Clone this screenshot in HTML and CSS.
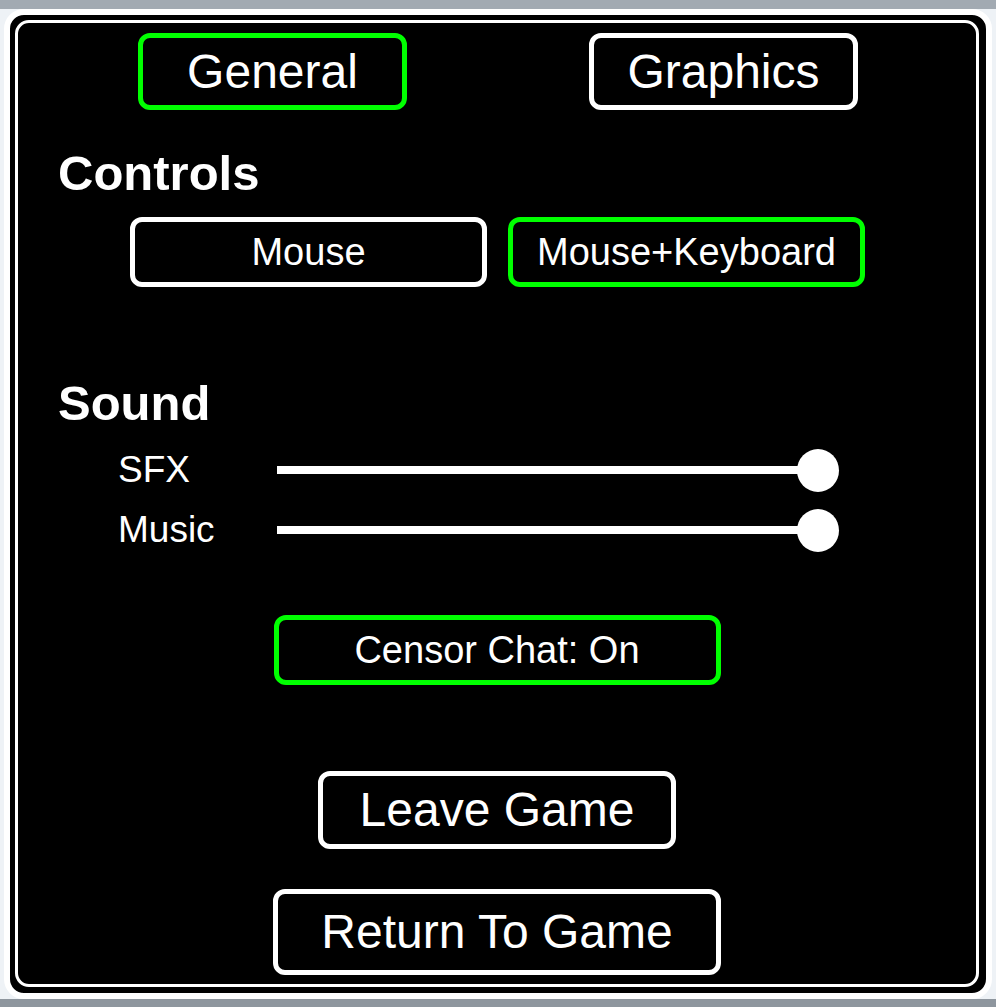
FILE: index.html
```html
<!DOCTYPE html>
<html lang="en">
<head>
  <meta charset="UTF-8" />
  <title>Settings</title>
  <link rel="stylesheet" href="styles.css">
</head>
<body>

  <!-- settings dialog -->
  <div class="frame">
    <div class="panel">

      <!-- tabs -->
      <div class="tabs">
        <button class="btn btn-tab active">General</button>
        <button class="btn btn-tab">Graphics</button>
      </div>

      <h2 class="section-title">Controls</h2>
      <div class="control-row">
        <button class="btn btn-small">Mouse</button>
        <button class="btn btn-small active">Mouse+Keyboard</button>
      </div>

      <h2 class="section-title sound-title">Sound</h2>
      <div class="slider-row">
        <span class="slider-label">SFX</span>
        <div class="slider"><div class="track"></div><div class="knob"></div></div>
      </div>
      <div class="slider-row music-row">
        <span class="slider-label">Music</span>
        <div class="slider"><div class="track"></div><div class="knob"></div></div>
      </div>

      <button class="btn btn-censor active">Censor Chat: On</button>

      <button class="btn btn-leave">Leave Game</button>
      <button class="btn btn-return">Return To Game</button>

    </div>
  </div>

</body>
</html>
```

FILE: styles.css
```css
/* page behind the dialog */
html {
  background: linear-gradient(to bottom, #a2aab2 0, #a2aab2 9px, #eef2f6 9px, #eef2f6 999px, #8e969e 999px);
}
body {
  margin: 0;
  height: 1007px;
  font-family: "Liberation Sans", Arial, sans-serif;
  color: #fff;
}

/* outer white frame + inner panel */
.frame {
  box-sizing: border-box;
  margin: 9px 0 0 4px;
  width: 988px;
  height: 990px;
  border: 6px solid #fff;
  border-radius: 20px;
  background: #000;
  padding: 5px 7px 6px 5px;
}
.panel {
  box-sizing: border-box;
  height: 100%;
  border: 3px solid #fff;
  border-radius: 14px;
  background: #000;
  display: flex;
  flex-direction: column;
  align-items: center;
}
.panel > * {
  flex-shrink: 0;
}

/* buttons */
.btn {
  box-sizing: border-box;
  display: flex;
  align-items: center;
  justify-content: center;
  background: #000;
  color: #fff;
  border: 5px solid #fff;
  border-radius: 12px;
  font-family: "Liberation Sans", Arial, sans-serif;
  line-height: 1;
  padding: 0;
  flex-shrink: 0;
}
.btn.active {
  border-color: #00ff00;
}

.tabs {
  align-self: stretch;
  display: flex;
  gap: 182px;
  padding-left: 120px;
  margin-top: 10px;
}
.btn-tab {
  width: 269px;
  height: 77px;
  font-size: 48px;
}

.section-title {
  align-self: stretch;
  margin: 39px 0 0 40px;
  font-size: 49px;
  line-height: 48px;
  font-weight: bold;
}
.sound-title {
  margin-top: 92px;
}

.control-row {
  align-self: stretch;
  display: flex;
  gap: 21px;
  padding-left: 112px;
  margin-top: 20px;
}
.btn-small {
  width: 357px;
  height: 70px;
  font-size: 38px;
}

/* volume sliders */
.slider-row {
  align-self: stretch;
  display: flex;
  align-items: center;
  padding-left: 100px;
  margin-top: 21px;
  height: 44px;
}
.music-row {
  margin-top: 16px;
}
.slider-label {
  width: 159px;
  font-size: 37px;
}
.slider {
  width: 562px;
  display: flex;
  align-items: center;
}
.track {
  flex: 1;
  height: 8px;
  background: #fff;
}
.knob {
  width: 42px;
  height: 43px;
  border-radius: 50%;
  background: #fff;
  margin-left: -14px;
}

.btn-censor {
  margin-top: 63px;
  width: 447px;
  height: 70px;
  font-size: 38px;
}
.btn-leave {
  margin-top: 86px;
  width: 358px;
  height: 78px;
  font-size: 48px;
}
.btn-return {
  margin-top: 40px;
  width: 448px;
  height: 86px;
  font-size: 48px;
}
```
